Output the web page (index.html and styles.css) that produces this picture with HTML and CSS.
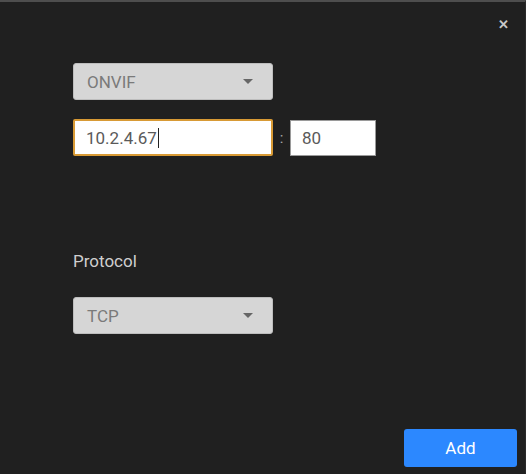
FILE: index.html
```html
<!DOCTYPE html>
<html lang="en">
<head>
    <meta charset="UTF-8">
    <title>Add Device</title>
    <link rel="stylesheet" href="styles.css">
</head>
<body>
    <div class="dialog">
        <span class="close">&#x2715;</span>
        <div class="form">
            <div class="select">
                <span>ONVIF</span>
                <span class="caret"></span>
            </div>
            <div class="address-row">
                <div class="input ip">10.2.4.67<span class="cursor"></span></div>
                <span class="colon">:</span>
                <div class="input port">80</div>
            </div>
            <div class="label">Protocol</div>
            <div class="select">
                <span>TCP</span>
                <span class="caret"></span>
            </div>
        </div>
        <div class="footer">
            <button class="add-btn">Add</button>
        </div>
    </div>
</body>
</html>
```

FILE: styles.css
```css
body {
    margin: 0;
    background-color: #202020;
    font-family: Roboto, "Liberation Sans", sans-serif;
}
.dialog {
    position: relative;
    height: 474px;
    box-sizing: border-box;
    border-top: 2px solid #4e4e4e;
    border-right: 1px solid #2a2a2a;
    display: flex;
    flex-direction: column;
}
.close {
    position: absolute;
    top: 15px;
    right: 16px;
    color: #c8c8c8;
    font-size: 13px;
    font-weight: bold;
}
.form {
    flex: 1;
    padding: 61px 0 0 73px;
    display: flex;
    flex-direction: column;
    align-items: flex-start;
}
.select {
    width: 200px;
    height: 37px;
    box-sizing: border-box;
    background: #d6d6d6;
    border: 1px solid #bdbdbd;
    border-radius: 3px;
    padding: 0 19px 0 13px;
    display: flex;
    align-items: center;
    justify-content: space-between;
    color: #7a7a7a;
    font-size: 17px;
}
.caret {
    width: 0;
    height: 0;
    border-left: 5px solid transparent;
    border-right: 5px solid transparent;
    border-top: 5px solid #666;
}
.address-row {
    display: flex;
    align-items: center;
    margin-top: 19px;
}
.input {
    height: 37px;
    box-sizing: border-box;
    background: #fff;
    display: flex;
    align-items: center;
    font-size: 17px;
    color: #5a5a5a;
}
.ip {
    width: 200px;
    border: 2px solid #d89a35;
    border-radius: 2px;
    padding-left: 11px;
}
.cursor {
    display: inline-block;
    width: 1px;
    height: 20px;
    background: #222;
    margin-left: 1px;
}
.colon {
    color: #aaa;
    font-size: 15px;
    width: 17px;
    text-align: center;
}
.port {
    width: 86px;
    height: 36px;
    border: 1px solid #9a9a9a;
    padding-left: 11px;
}
.label {
    margin-top: 95px;
    color: #cfcfcf;
    font-size: 17px;
}
.label + .select {
    margin-top: 26px;
}
.footer {
    display: flex;
    justify-content: flex-end;
    padding: 0 8px 7px 0;
}
.add-btn {
    width: 113px;
    height: 38px;
    background: #2c88ff;
    color: #fff;
    border: none;
    border-radius: 3px;
    font-family: Roboto, "Liberation Sans", sans-serif;
    font-size: 17px;
}
```
